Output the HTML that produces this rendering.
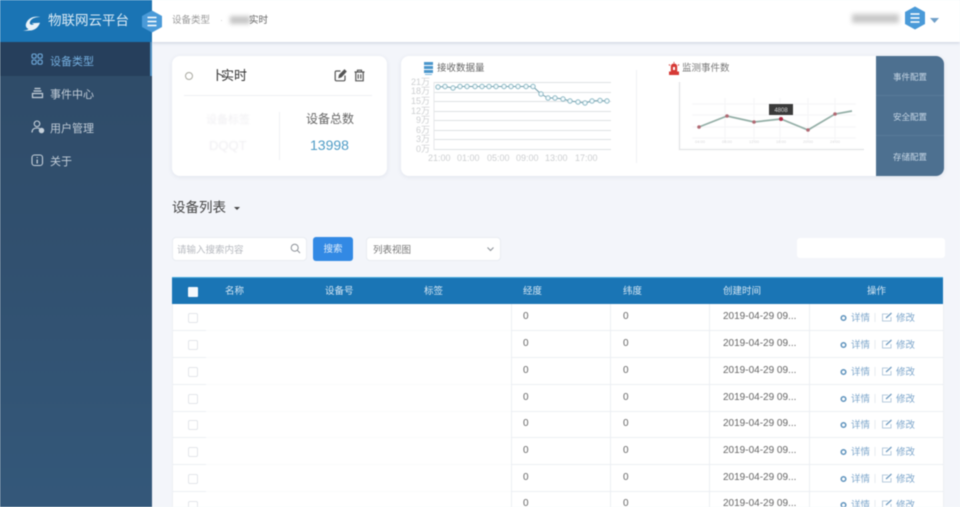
<!DOCTYPE html>
<html lang="zh">
<head>
<meta charset="utf-8">
<title>物联网云平台</title>
<style>
*{box-sizing:border-box;margin:0;padding:0}
html,body{width:960px;height:507px;overflow:hidden;background:#f3f5fa}
body{font-family:"Liberation Sans","Noto Sans CJK SC",sans-serif;position:relative;color:#555}
.a{position:absolute;white-space:nowrap}
#wrap{position:absolute;left:0;top:0;width:960px;height:507px;overflow:hidden;filter:blur(.45px);background:#f3f5fa}
.card{position:absolute;background:#fff;border-radius:8px;box-shadow:0 1px 5px rgba(60,80,120,.10)}
.nav{position:absolute;left:50px;font-size:11px;line-height:14px;color:#c3ced9}
.th{position:absolute;top:285px;font-size:9.500px;line-height:13px;color:#d5e6f3}
.c{position:absolute;font-size:10px;line-height:13px;color:#666}
.rl{position:absolute;left:172px;width:771px;height:1px;background:#eceff3}
.vl{position:absolute;top:304px;width:1px;height:203px;background:#eceff3}
.cb{position:absolute;left:188px;width:10px;height:10px;border:1px solid #e3e6ea;border-radius:2px;background:#fff}
.lnk{position:absolute;font-size:9.500px;line-height:13px;color:#7da6cb}
.conf{position:absolute;left:876px;width:68px;height:40px;text-align:center;line-height:42px;font-size:8.500px;color:#c6d6e5}
svg{position:absolute;overflow:visible}
</style>
</head>
<body>
<div id="wrap">

<!-- sidebar -->
<div class="a" style="left:0;top:42px;width:152px;height:465px;background:linear-gradient(180deg,#2f4b68 0%,#31506f 45%,#34587a 100%)"></div>
<div class="a" style="left:0;top:42px;width:151px;height:34px;background:#263f5c"></div>
<div class="a" style="left:150px;top:42px;width:2px;height:34px;background:#4f8fc0"></div>
<div class="a" style="left:0;top:0;width:152px;height:42px;background:#1a74b4"></div>

<!-- logo -->
<svg style="left:22px;top:14px" width="20" height="18" viewBox="0 0 20 18">
  <path d="M0.500 16.500C3 16.500 5.500 16 6.500 15C4 14 3 11.500 4.500 8.500C6.500 4 12 1.500 18.500 3C13 2.800 8.500 4.800 7.800 8.500C7.500 10.800 10 11.300 12 10.300L9.500 9.300L18 8.800C16.500 13.500 12.500 16.500 8 16.500C5 16.800 2.500 16.800 0.500 16.500Z" fill="#eaf3f9"/>
</svg>
<div class="a" style="left:48px;top:12px;font-size:13.500px;line-height:18px;color:#dcebf5">物联网云平台</div>

<!-- nav -->
<svg style="left:31px;top:53px" width="13" height="13" viewBox="0 0 13 13" fill="none" stroke="#6faadb" stroke-width="1.100">
  <rect x="1" y="1" width="4.200" height="4.200" rx="1.500"/><rect x="7" y="1" width="4.200" height="4.200" rx="1.500"/>
  <rect x="1" y="7" width="4.200" height="4.200" rx="1.500"/><rect x="7" y="7" width="4.200" height="4.200" rx="1.500"/>
</svg>
<div class="nav" style="top:55px;color:#74aede">设备类型</div>
<svg style="left:31px;top:87px" width="13" height="12" viewBox="0 0 13 12" fill="none" stroke="#c5d0da" stroke-width="1.200">
  <path d="M3.500 1.500H9.500M2.500 4H10.500M1.500 6.500H11.500V10.500H1.500Z"/>
</svg>
<div class="nav" style="top:88px">事件中心</div>
<svg style="left:31px;top:120px" width="14" height="14" viewBox="0 0 14 14" fill="none" stroke="#c5d0da" stroke-width="1.100">
  <circle cx="6" cy="3.800" r="2.800"/><path d="M1 12.500C1 9.500 3 8 6 8C7 8 8 8.200 8.500 8.500"/><circle cx="10.500" cy="10.500" r="2.200" fill="#c5d0da"/>
</svg>
<div class="nav" style="top:122px">用户管理</div>
<svg style="left:31px;top:154px" width="13" height="13" viewBox="0 0 13 13" fill="none" stroke="#c5d0da" stroke-width="1.100">
  <rect x="1" y="1" width="10.500" height="10.500" rx="2.500"/><path d="M6.200 3V4M6.200 5.500V9.500" stroke-width="1.300"/>
</svg>
<div class="nav" style="top:155px">关于</div>

<!-- top bar -->
<div class="a" style="left:152px;top:0;width:808px;height:42px;background:#fff;box-shadow:0 1px 3px rgba(90,110,150,.28)"></div>
<svg style="left:141px;top:10px" width="22" height="23" viewBox="0 0 22 23">
  <path d="M11 0.500L21 6V17L11 22.500L1 17V6Z" fill="#4a9ad8"/>
  <path d="M6.500 7.500H15.500M6.500 11.500H15.500M6.500 15.500H15.500" stroke="#fff" stroke-width="1.500"/>
</svg>
<div class="a" style="left:172px;top:14px;font-size:9.500px;line-height:13px;color:#999">设备类型</div>
<div class="a" style="left:220px;top:14px;font-size:9px;line-height:13px;color:#ccc">·</div>
<div class="a" style="left:230px;top:16px;width:20px;height:8px;background:#c6c6c6;filter:blur(2px)"></div>
<div class="a" style="left:249px;top:14px;font-size:9.500px;line-height:13px;color:#666">实时</div>

<div class="a" style="left:852px;top:14px;width:47px;height:9px;background:#c9c9c9;filter:blur(2.500px)"></div>
<svg style="left:904px;top:6px" width="22" height="24" viewBox="0 0 22 24">
  <path d="M11 0.500L21 6V18L11 23.500L1 18V6Z" fill="#4a9ad8"/>
  <path d="M6.500 8H15.500M6.500 12H15.500M6.500 16H15.500" stroke="#fff" stroke-width="1.500"/>
</svg>
<svg style="left:929px;top:17px" width="11" height="7" viewBox="0 0 11 7"><path d="M1 1H10L5.500 6Z" fill="#6f9fc8"/></svg>

<!-- card 1 -->
<div class="card" style="left:172px;top:56px;width:215px;height:120px"></div>
<div class="a" style="left:185px;top:72px;width:8px;height:8px;border:1.300px solid #a9a9a0;border-radius:50%"></div>
<div class="a" style="left:212px;top:67px;font-size:13px;line-height:18px;color:#333"><span style="margin-right:-4px">卜</span>实时</div>
<svg style="left:334px;top:69px" width="13" height="13" viewBox="0 0 13 13" fill="none" stroke="#555" stroke-width="1.200">
  <path d="M11 6.500V10.500C11 11.300 10.500 11.800 9.700 11.800H2.500C1.700 11.800 1.200 11.300 1.200 10.500V3.300C1.200 2.500 1.700 2 2.500 2H6.500"/>
  <path d="M5 8.500L5.500 6L10.500 1L12 2.500L7.200 7.800Z" fill="#555"/>
</svg>
<svg style="left:353px;top:69px" width="13" height="13" viewBox="0 0 13 13" fill="none" stroke="#555" stroke-width="1.200">
  <path d="M1.500 3H11.500M4.500 3V1.200H8.500V3M2.800 3V11.800H10.200V3M5.200 5.200V9.800M7.800 5.200V9.800"/>
</svg>
<div class="a" style="left:184px;top:95px;width:188px;height:1px;background:#eef0f3"></div>
<div class="a" style="left:279px;top:112px;width:1px;height:48px;background:#f0f1f4"></div>
<div class="a" style="left:206px;top:113px;font-size:11px;line-height:15px;color:#f0eff2;filter:blur(.8px)">设备标签</div>
<div class="a" style="left:209px;top:137px;font-size:13px;line-height:17px;color:#f0eff2;filter:blur(.5px)">DQQT</div>
<div class="a" style="left:306px;top:111px;font-size:12px;line-height:17px;color:#666">设备总数</div>
<div class="a" style="left:310px;top:136px;font-size:14px;line-height:18px;color:#4f9cc6">13998</div>

<!-- card 2 -->
<div class="card" style="left:401px;top:56px;width:543px;height:120px"></div>
<div class="a" style="left:636px;top:70px;width:1px;height:93px;background:#eff1f4"></div>

<!-- chart 1 -->
<svg style="left:423px;top:62px" width="11" height="13" viewBox="0 0 11 13">
  <rect x="1" y="0" width="9" height="3" fill="#4a96cc"/><rect x="1" y="4" width="9" height="3" fill="#4a96cc"/><rect x="1" y="8" width="9" height="3" fill="#4a96cc"/><rect x="2" y="12" width="7" height="1" fill="#7fb9df"/>
</svg>
<div class="a" style="left:437px;top:62px;font-size:9.500px;line-height:13px;color:#666">接收数据量</div>
<svg style="left:400px;top:76px" width="220" height="90" viewBox="400 76 220 90">
  <g stroke="#dfe2e4" stroke-width="1">
    <path d="M434 82.500H611M434 92.500H611M434 101.500H611M434 111.500H611M434 120.500H611M434 130.500H611M434 139.500H611M434 149.500H611"/>
  </g>
  <path d="M434 82V150" stroke="#e6e8ea"/>
  <g font-size="9" fill="#cdcfd1" font-family="'Liberation Sans','Noto Sans CJK SC',sans-serif">
    <text x="411" y="85">21万</text><text x="411" y="94">18万</text><text x="411" y="104">15万</text><text x="411" y="114">12万</text>
    <text x="416" y="123">9万</text><text x="416" y="133">6万</text><text x="416" y="142">3万</text><text x="416" y="152">0万</text>
    <text x="428" y="161">21:00</text><text x="457" y="161">01:00</text><text x="487" y="161">05:00</text><text x="516" y="161">09:00</text><text x="545" y="161">13:00</text><text x="575" y="161">17:00</text>
  </g>
  <polyline fill="none" stroke="#6f9aa8" stroke-width="1" points="438,87 445,86.500 453,88 460,86.500 467,86.500 475,86.500 482,86.500 489,86.500 496,86.500 504,86.500 511,86.500 518,86.500 526,86.500 533,86.500 541,94 548,98 555,98 563,99 570,101 578,102 585,103 592,101 600,100.500 607,101"/>
  <g fill="#f4fbfd" stroke="#8db8c4" stroke-width="1">
    <circle cx="438" cy="87" r="2.200"/><circle cx="445" cy="86.500" r="2.200"/><circle cx="453" cy="88" r="2.200"/><circle cx="460" cy="86.500" r="2.200"/><circle cx="467" cy="86.500" r="2.200"/><circle cx="475" cy="86.500" r="2.200"/><circle cx="482" cy="86.500" r="2.200"/><circle cx="489" cy="86.500" r="2.200"/><circle cx="496" cy="86.500" r="2.200"/><circle cx="504" cy="86.500" r="2.200"/><circle cx="511" cy="86.500" r="2.200"/><circle cx="518" cy="86.500" r="2.200"/><circle cx="526" cy="86.500" r="2.200"/><circle cx="533" cy="86.500" r="2.200"/><circle cx="541" cy="94" r="2.200"/><circle cx="548" cy="98" r="2.200"/><circle cx="555" cy="98" r="2.200"/><circle cx="563" cy="99" r="2.200"/><circle cx="570" cy="101" r="2.200"/><circle cx="578" cy="102" r="2.200"/><circle cx="585" cy="103" r="2.200"/><circle cx="592" cy="101" r="2.200"/><circle cx="600" cy="100.500" r="2.200"/><circle cx="607" cy="101" r="2.200"/>
  </g>
</svg>

<!-- chart 2 -->
<svg style="left:668px;top:62px" width="12" height="13" viewBox="0 0 12 13">
  <path d="M2.800 4.500C2.800 2.500 4.500 1.500 6 1.500C7.500 1.500 9.200 2.500 9.200 4.500V9.500H2.800Z" fill="#d63a36"/><rect x="1" y="9.500" width="10" height="3.500" fill="#d63a36"/>
  <path d="M6 0V1M1 2.500L2 3.500M11 2.500L10 3.500" stroke="#d63a36"/><rect x="5" y="5" width="2" height="3" fill="#fff"/>
</svg>
<div class="a" style="left:682px;top:62px;font-size:9.500px;line-height:13px;color:#777">监测事件数</div>
<svg style="left:676px;top:80px" width="200" height="75" viewBox="676 80 200 75">
  <path d="M679.500 82V149.500H864" fill="none" stroke="#e3e4e6" stroke-width="1.300"/>
  <g stroke="#f5f5f7"><path d="M692 104H856M692 115H856M692 127H856M692 138H856M725 98V142M754 98V142M780 98V142M808 98V142M835 98V142"/></g>
  <g font-size="4" fill="#d8d8da" font-family="'Liberation Sans',sans-serif"><text x="695" y="143">04:00</text><text x="722" y="143">08:00</text><text x="749" y="143">12:00</text><text x="776" y="143">16:00</text><text x="803" y="143">20:00</text><text x="830" y="143">24:00</text></g>
  <polyline fill="none" stroke="#93aea6" stroke-width="1.700" points="699,127 727,116 754,122 781,119 808,130 835,114 852,111"/>
  <g fill="#b16a74"><circle cx="699" cy="127" r="1.800"/><circle cx="727" cy="116" r="1.800"/><circle cx="754" cy="122" r="1.800"/><circle cx="808" cy="130" r="1.800"/><circle cx="835" cy="114" r="1.800"/></g>
  <circle cx="781" cy="119" r="2" fill="#b02a44"/>
  <rect x="769" y="104" width="24" height="11" fill="#3a3a3a"/>
  <text x="781" y="112" text-anchor="middle" font-size="6" fill="#ddd" font-family="'Liberation Sans',sans-serif">4808</text>
</svg>

<!-- config panel -->
<div class="a" style="left:876px;top:56px;width:68px;height:120px;background:#4d7090;border-radius:0 8px 8px 0"></div>
<div class="a" style="left:876px;top:95px;width:68px;height:1px;background:#587a99"></div>
<div class="a" style="left:876px;top:135px;width:68px;height:1px;background:#587a99"></div>
<div class="conf" style="top:56px">事件配置</div>
<div class="conf" style="top:96px">安全配置</div>
<div class="conf" style="top:136px">存储配置</div>

<!-- list title -->
<div class="a" style="left:172px;top:198px;font-size:13.500px;line-height:19px;color:#444">设备列表</div>
<svg style="left:233px;top:206px" width="8" height="5" viewBox="0 0 8 5"><path d="M1 1H7L4 4Z" fill="#444"/></svg>

<!-- search row -->
<div class="a" style="left:172px;top:237px;width:135px;height:24px;background:#fff;border:1px solid #e9ecf1;border-radius:4px"></div>
<div class="a" style="left:177px;top:244px;font-size:9.500px;line-height:13px;color:#b6b9bf">请输入搜索内容</div>
<svg style="left:290px;top:243px" width="11" height="11" viewBox="0 0 11 11" fill="none" stroke="#8d9299" stroke-width="1"><circle cx="4.700" cy="4.700" r="3.500"/><path d="M7.300 7.300L10 10"/></svg>
<div class="a" style="left:313px;top:237px;width:40px;height:24px;background:#3289e4;border-radius:3px;color:#dcebfa;font-size:9.500px;line-height:26px;text-align:center">搜索</div>
<div class="a" style="left:366px;top:237px;width:135px;height:24px;background:#fff;border:1px solid #e9ecf1;border-radius:4px"></div>
<div class="a" style="left:373px;top:244px;font-size:9.500px;line-height:13px;color:#777">列表视图</div>
<svg style="left:487px;top:247px" width="7" height="4" viewBox="0 0 7 4" fill="none" stroke="#8a8f96"><path d="M.5 .5L3.500 3.500L6.500 .5"/></svg>
<div class="a" style="left:797px;top:238px;width:148px;height:20px;background:#fff;border-radius:3px"></div>

<!-- table -->
<div class="a" style="left:172px;top:304px;width:771px;height:203px;background:#fff"></div>
<div class="a" style="left:172px;top:277px;width:771px;height:27px;background:#1a75b5;border-top:1px solid #45a8dc"></div>
<div class="a" style="left:188px;top:287px;width:10px;height:10px;background:#f3f8fc;border-radius:1px"></div>
<div class="th" style="left:225px">名称</div>
<div class="th" style="left:325px">设备号</div>
<div class="th" style="left:424px">标签</div>
<div class="th" style="left:523px">经度</div>
<div class="th" style="left:623px">纬度</div>
<div class="th" style="left:723px">创建时间</div>
<div class="th" style="left:867px">操作</div>

<div class="vl" style="left:511px"></div>
<div class="vl" style="left:610px"></div>
<div class="vl" style="left:709px"></div>
<div class="vl" style="left:809px"></div>
<div class="rl" style="top:330px"></div>
<div class="rl" style="top:357px"></div>
<div class="rl" style="top:384px"></div>
<div class="rl" style="top:411px"></div>
<div class="rl" style="top:437px"></div>
<div class="rl" style="top:464px"></div>
<div class="rl" style="top:491px"></div>
<div class="a" style="left:206px;top:304px;width:305px;height:203px;background:rgba(255,255,255,.75)"></div>
<div class="a" style="left:172px;top:304px;width:1px;height:203px;background:#eef0f3"></div>
<div class="a" style="left:943px;top:304px;width:1px;height:203px;background:#eef0f3"></div>

<div class="cb" style="top:313px"></div><div class="cb" style="top:340px"></div><div class="cb" style="top:367px"></div><div class="cb" style="top:394px"></div><div class="cb" style="top:420px"></div><div class="cb" style="top:447px"></div><div class="cb" style="top:474px"></div><div class="cb" style="top:501px"></div>

<div class="c" style="left:523px;top:310px">0</div><div class="c" style="left:623px;top:310px">0</div><div class="c" style="left:723px;top:310px">2019-04-29 09...</div>
<div class="c" style="left:523px;top:337px">0</div><div class="c" style="left:623px;top:337px">0</div><div class="c" style="left:723px;top:337px">2019-04-29 09...</div>
<div class="c" style="left:523px;top:364px">0</div><div class="c" style="left:623px;top:364px">0</div><div class="c" style="left:723px;top:364px">2019-04-29 09...</div>
<div class="c" style="left:523px;top:391px">0</div><div class="c" style="left:623px;top:391px">0</div><div class="c" style="left:723px;top:391px">2019-04-29 09...</div>
<div class="c" style="left:523px;top:417px">0</div><div class="c" style="left:623px;top:417px">0</div><div class="c" style="left:723px;top:417px">2019-04-29 09...</div>
<div class="c" style="left:523px;top:444px">0</div><div class="c" style="left:623px;top:444px">0</div><div class="c" style="left:723px;top:444px">2019-04-29 09...</div>
<div class="c" style="left:523px;top:471px">0</div><div class="c" style="left:623px;top:471px">0</div><div class="c" style="left:723px;top:471px">2019-04-29 09...</div>
<div class="c" style="left:523px;top:497px">0</div><div class="c" style="left:623px;top:497px">0</div><div class="c" style="left:723px;top:497px">2019-04-29 09...</div>

<svg style="left:838px;top:304px" width="80" height="203" viewBox="0 0 80 203">
  <defs>
    <g id="ic">
      <circle cx="5.500" cy="14" r="2.300" fill="none" stroke="#5f93bd" stroke-width="1.500"/>
      <path d="M50 10H44.500V17H53V13" fill="none" stroke="#a3bdd4" stroke-width=".8"/>
      <path d="M48 14L53.500 9" stroke="#6f9abf" stroke-width="1.300"/>
      <path d="M37 9V18" stroke="#e7ecf1" stroke-width="1"/>
    </g>
  </defs>
  <use href="#ic" y="0"/><use href="#ic" y="27"/><use href="#ic" y="54"/><use href="#ic" y="81"/><use href="#ic" y="107"/><use href="#ic" y="134"/><use href="#ic" y="161"/><use href="#ic" y="187"/>
</svg>
<div class="lnk" style="left:851px;top:312px">详情</div><div class="lnk" style="left:896px;top:312px">修改</div>
<div class="lnk" style="left:851px;top:339px">详情</div><div class="lnk" style="left:896px;top:339px">修改</div>
<div class="lnk" style="left:851px;top:366px">详情</div><div class="lnk" style="left:896px;top:366px">修改</div>
<div class="lnk" style="left:851px;top:393px">详情</div><div class="lnk" style="left:896px;top:393px">修改</div>
<div class="lnk" style="left:851px;top:419px">详情</div><div class="lnk" style="left:896px;top:419px">修改</div>
<div class="lnk" style="left:851px;top:446px">详情</div><div class="lnk" style="left:896px;top:446px">修改</div>
<div class="lnk" style="left:851px;top:473px">详情</div><div class="lnk" style="left:896px;top:473px">修改</div>
<div class="lnk" style="left:851px;top:499px">详情</div><div class="lnk" style="left:896px;top:499px">修改</div>

</div>
</body>
</html>
